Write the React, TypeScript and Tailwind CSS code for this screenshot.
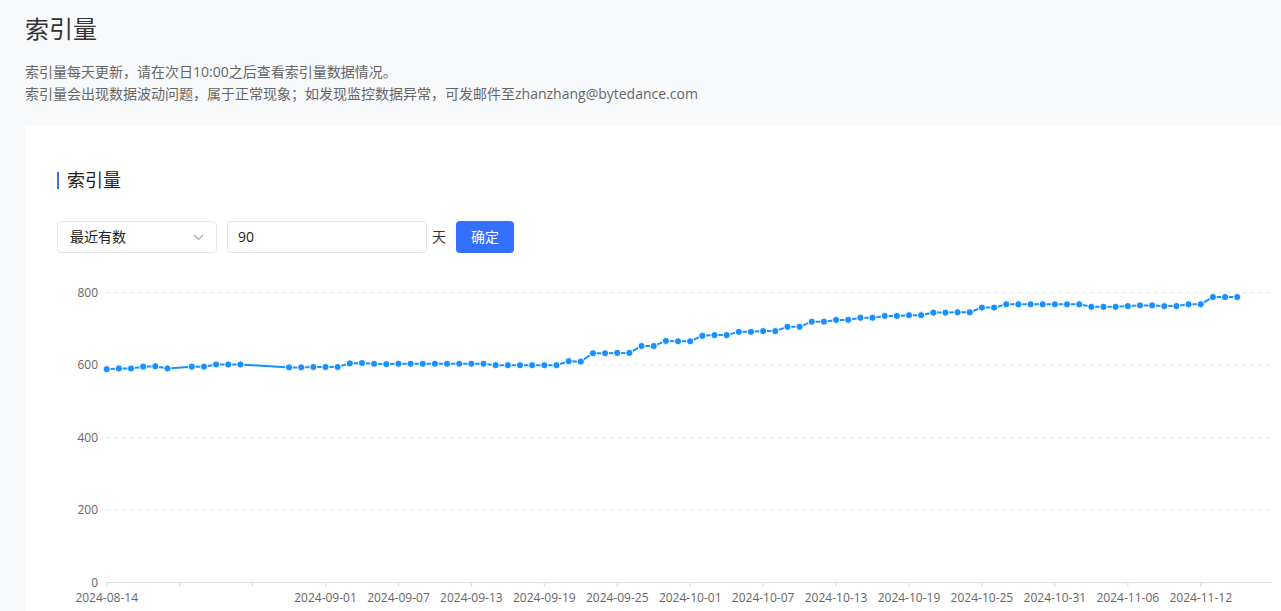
import React from "react";

// [day offset from 2024-08-14, index count]
const points: [number, number][] = [
  [0, 589], [1, 591], [2, 591], [3, 596], [4, 597], [5, 591],
  [7, 596], [8, 596], [9, 602], [10, 602], [11, 602],
  [15, 594], [16, 594], [17, 595], [18, 595], [19, 595], [20, 605], [21, 606], [22, 604], [23, 603],
  [24, 604], [25, 604], [26, 604], [27, 604], [28, 604], [29, 604], [30, 604], [31, 604],
  [32, 600], [33, 600], [34, 600], [35, 600], [36, 600], [37, 600], [38, 611], [39, 610],
  [40, 633], [41, 633], [42, 634], [43, 634], [44, 653], [45, 653], [46, 667], [47, 666], [48, 666],
  [49, 681], [50, 683], [51, 683], [52, 692], [53, 692], [54, 694], [55, 694], [56, 706], [57, 706],
  [58, 720], [59, 720], [60, 725], [61, 725], [62, 731], [63, 731], [64, 736], [65, 736],
  [66, 738], [67, 738], [68, 745], [69, 745], [70, 746], [71, 746], [72, 759], [73, 759],
  [74, 768], [75, 768], [76, 768], [77, 768], [78, 768], [79, 768], [80, 768],
  [81, 761], [82, 761], [83, 761], [84, 763], [85, 765], [86, 765], [87, 763], [88, 763],
  [89, 768], [90, 768], [91, 788], [92, 788], [93, 788],
];

const tickLabels = [
  "2024-08-14", "", "", "2024-09-01", "2024-09-07", "2024-09-13", "2024-09-19", "2024-09-25",
  "2024-10-01", "2024-10-07", "2024-10-13", "2024-10-19", "2024-10-25", "2024-10-31",
  "2024-11-06", "2024-11-12",
];

const X0 = 49.7;
const X1 = 1215;
const DAY = 12.156;
const Y0 = 317.7;
const PER = 0.3625;

const px = (d: number) => X0 + d * DAY;
const py = (v: number) => Y0 - v * PER;

function IndexChart() {
  const linePath = points.map(([d, v], i) => `${i ? "L" : "M"}${px(d).toFixed(1)},${py(v).toFixed(1)}`).join(" ");
  return (
    <svg width={1224} height={346} className="block mt-3" style={{ fontFamily: '"Open Sans","Noto Sans CJK SC",sans-serif' }}>
      {[200, 400, 600, 800].map(v => (
        <line key={v} x1={X0} x2={X1} y1={py(v)} y2={py(v)} stroke="#e6e6e6" strokeDasharray="4 4" />
      ))}
      {[0, 200, 400, 600, 800].map(v => (
        <text key={v} x={41} y={py(v) + 4} textAnchor="end" fontSize={12} fill="#666">{v}</text>
      ))}
      <line x1={X0} x2={X1} y1={Y0} y2={Y0} stroke="#d9d9d9" />
      {tickLabels.map((label, k) => (
        <g key={k}>
          <line x1={px(k * 6)} x2={px(k * 6)} y1={Y0} y2={Y0 + 4} stroke="#d9d9d9" />
          {label && (
            <text x={px(k * 6)} y={Y0 + 19} textAnchor="middle" fontSize={12} fill="#666">{label}</text>
          )}
        </g>
      ))}
      <path d={linePath} fill="none" stroke="#1890ff" strokeWidth={2} />
      {points.map(([d, v]) => (
        <circle key={d} cx={px(d)} cy={py(v)} r={3.6} fill="#1890ff" stroke="#fff" strokeWidth={1} />
      ))}
    </svg>
  );
}

export default function App() {
  return (
    <div
      className="min-h-screen bg-[#f8f9fb] pl-[25px] pt-[13px] text-[#333]"
      style={{ fontFamily: '"Open Sans","Noto Sans CJK SC",sans-serif' }}
    >
      <h1 className="text-2xl leading-8 text-[#333]">索引量</h1>
      <div className="mt-4 text-sm leading-[22px] text-[#666]">
        <p>索引量每天更新，请在次日10:00之后查看索引量数据情况。</p>
        <p>索引量会出现数据波动问题，属于正常现象；如发现监控数据异常，可发邮件至zhanzhang@bytedance.com</p>
      </div>

      <div className="mt-5 bg-white pl-8 pt-[43px] pb-10">
        <div className="flex items-center h-6">
          <span className="w-[2px] h-[17px] bg-[#3370ff]" />
          <h2 className="ml-2 text-lg leading-6 text-[#222]">索引量</h2>
        </div>

        <div className="mt-[29px] flex items-center">
          <div className="w-[160px] h-8 border border-[#e5e6eb] rounded flex items-center justify-between pl-3 pr-3 text-sm text-[#222]">
            <span>最近有数</span>
            <svg width="11" height="7" viewBox="0 0 11 7" fill="none">
              <path d="M1 1l4.5 4.5L10 1" stroke="#a6a6a6" strokeWidth="1.1" />
            </svg>
          </div>
          <div className="ml-[10px] w-[200px] h-8 border border-[#e5e6eb] rounded flex items-center px-[10px] text-sm text-[#222]">
            90
          </div>
          <span className="ml-[5px] text-sm text-[#333]">天</span>
          <button className="ml-[10px] h-8 w-[58px] rounded bg-[#3370ff] text-sm text-white">确定</button>
        </div>

        <IndexChart />
      </div>
    </div>
  );
}
